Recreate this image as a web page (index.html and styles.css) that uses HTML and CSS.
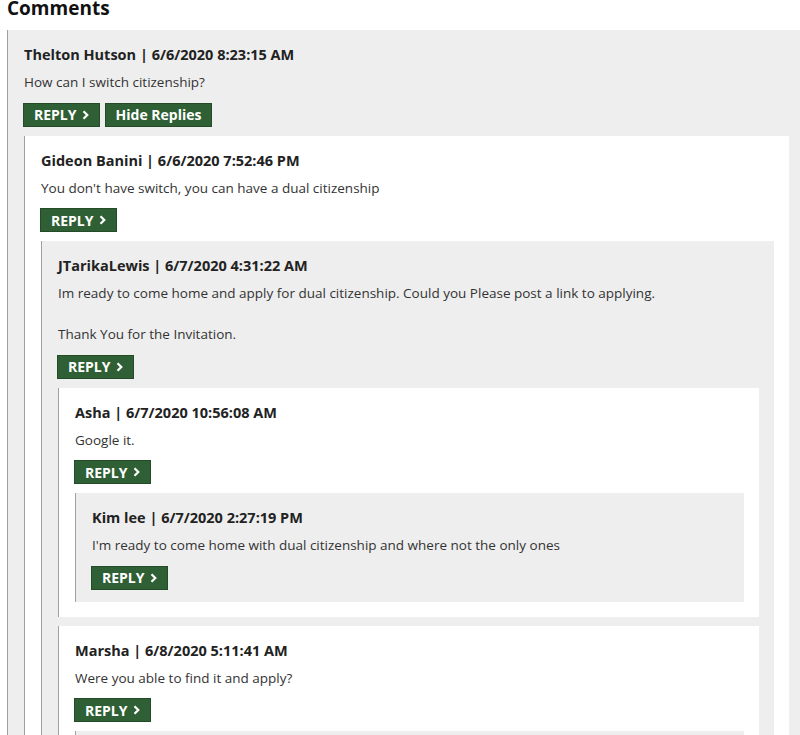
FILE: index.html
```html
<!DOCTYPE html>
<html>
<head>
<meta charset="utf-8">
<link rel="stylesheet" href="styles.css">
</head>
<body>
<div class="page">
  <h2 class="title">Comments</h2>
  <div class="comment level-odd root">
    <div class="meta">Thelton Hutson | 6/6/2020 8:23:15 AM</div>
    <div class="text">How can I switch citizenship?</div>
    <div class="actions">
      <button class="btn">REPLY <svg class="chev" viewBox="0 0 7 10" width="7" height="10"><path d="M1.5 1.2l3.8 3.8-3.8 3.8" fill="none" stroke="#fff" stroke-width="2.2"/></svg></button>
      <button class="btn">Hide Replies</button>
    </div>
    <div class="comment level-even">
      <div class="meta">Gideon Banini | 6/6/2020 7:52:46 PM</div>
      <div class="text">You don't have switch, you can have a dual citizenship</div>
      <div class="actions">
        <button class="btn">REPLY <svg class="chev" viewBox="0 0 7 10" width="7" height="10"><path d="M1.5 1.2l3.8 3.8-3.8 3.8" fill="none" stroke="#fff" stroke-width="2.2"/></svg></button>
      </div>
      <div class="comment level-odd">
        <div class="meta">JTarikaLewis | 6/7/2020 4:31:22 AM</div>
        <div class="text">Im ready to come home and apply for dual citizenship. Could you Please post a link to applying.<br><br>Thank You for the Invitation.</div>
        <div class="actions">
          <button class="btn">REPLY <svg class="chev" viewBox="0 0 7 10" width="7" height="10"><path d="M1.5 1.2l3.8 3.8-3.8 3.8" fill="none" stroke="#fff" stroke-width="2.2"/></svg></button>
        </div>
        <div class="comment level-even">
          <div class="meta">Asha | 6/7/2020 10:56:08 AM</div>
          <div class="text">Google it.</div>
          <div class="actions">
            <button class="btn">REPLY <svg class="chev" viewBox="0 0 7 10" width="7" height="10"><path d="M1.5 1.2l3.8 3.8-3.8 3.8" fill="none" stroke="#fff" stroke-width="2.2"/></svg></button>
          </div>
          <div class="comment level-odd">
            <div class="meta">Kim lee | 6/7/2020 2:27:19 PM</div>
            <div class="text">I'm ready to come home with dual citizenship and where not the only ones</div>
            <div class="actions">
              <button class="btn">REPLY <svg class="chev" viewBox="0 0 7 10" width="7" height="10"><path d="M1.5 1.2l3.8 3.8-3.8 3.8" fill="none" stroke="#fff" stroke-width="2.2"/></svg></button>
            </div>
          </div>
        </div>
        <div class="comment level-even">
          <div class="meta">Marsha | 6/8/2020 5:11:41 AM</div>
          <div class="text">Were you able to find it and apply?</div>
          <div class="actions">
            <button class="btn">REPLY <svg class="chev" viewBox="0 0 7 10" width="7" height="10"><path d="M1.5 1.2l3.8 3.8-3.8 3.8" fill="none" stroke="#fff" stroke-width="2.2"/></svg></button>
          </div>
          <div class="comment level-odd">
          </div>
        </div>
      </div>
    </div>
  </div>
</div>
</body>
</html>
```
FILE: styles.css
```css
html, body {
  margin: 0;
  padding: 0;
  background: #fff;
  overflow: hidden;
}
.page {
  padding-left: 7px;
  font-family: "Open Sans", "DejaVu Sans", sans-serif;
  color: #333;
}
.title {
  margin: -5px 0 0 0;
  font-size: 19px;
  font-weight: 700;
  line-height: 27px;
  color: #111;
  height: 35px;
}
.comment {
  border-left: 1px solid #a0a0a0;
  padding: 15px 15px 12px 16px;
  margin: 9px 0 3px 0;
  min-height: 60px;
}
.root {
  margin-top: 0;
  margin-right: -4px;
}
.level-odd {
  background: #eeeeee;
}
.level-even {
  background: #ffffff;
}
.meta {
  font-size: 14.5px;
  font-weight: 700;
  line-height: 20px;
  color: #222;
}
.text {
  font-size: 13.5px;
  line-height: 20.5px;
  margin-top: 7px;
  color: #333;
}
.actions {
  display: flex;
  gap: 5px;
  margin-top: 10px;
  margin-left: -1px;
}
.btn {
  height: 24px;
  padding: 0 10px;
  border: 1px solid #244a28;
  background: #2f5f34;
  color: #fff;
  font-family: "Open Sans", "DejaVu Sans", sans-serif;
  font-size: 14px;
  font-weight: 700;
  display: flex;
  align-items: center;
  gap: 5px;
  cursor: pointer;
}
.chev {
  display: block;
}
```
